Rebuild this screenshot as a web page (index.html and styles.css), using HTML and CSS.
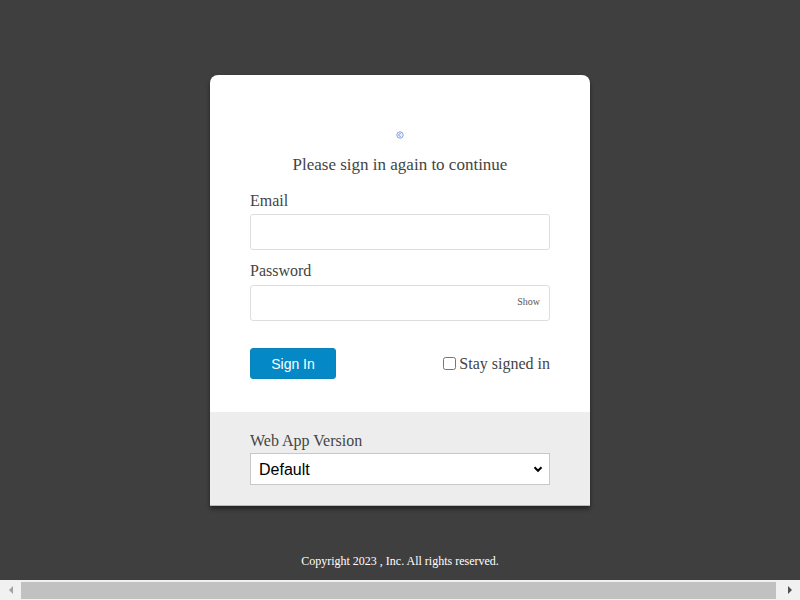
FILE: index.html
```html
<!DOCTYPE html>
<html lang="en">
<head>
<meta charset="utf-8">
<title>Sign in</title>
<link rel="stylesheet" href="styles.css">
</head>
<body>
<div class="page">
  <div class="card">
    <div class="card-main">
      <div class="logo">
        <svg width="8" height="8" viewBox="0 0 8 8" aria-label="logo">
          <circle cx="4" cy="4" r="3.2" fill="none" stroke="#7f9fdc" stroke-width="1"/>
          <path d="M5.2 3.1 A1.4 1.4 0 1 0 5.2 4.9" fill="none" stroke="#6d8fd4" stroke-width="0.9"/>
        </svg>
      </div>
      <h1 class="title">Please sign in again to continue</h1>
      <form class="form">
        <label class="label" for="email">Email</label>
        <input class="field" id="email" type="text">
        <label class="label label-pw" for="pw">Password</label>
        <div class="pw-wrap">
          <input class="field" id="pw" type="password">
          <span class="show">Show</span>
        </div>
        <div class="actions">
          <button class="btn" type="button">Sign In</button>
          <label class="stay"><input type="checkbox" class="check">Stay signed in</label>
        </div>
      </form>
    </div>
    <div class="card-foot">
      <label class="label" for="ver">Web App Version</label>
      <div class="select-wrap">
        <select class="select" id="ver">
          <option>Default</option>
        </select>
        <svg class="chev" width="10" height="7" viewBox="0 0 10 7" aria-hidden="true">
          <path d="M1.5 1.3 L5 4.8 L8.5 1.3" fill="none" stroke="#000" stroke-width="2"/>
        </svg>
      </div>
    </div>
  </div>
  <footer class="footer">Copyright 2023 , Inc. All rights reserved.</footer>
</div>
<div class="hscroll" aria-hidden="true">
  <span class="arrow arrow-left"></span>
  <span class="thumb"></span>
  <span class="arrow arrow-right"></span>
</div>
</body>
</html>
```
FILE: styles.css
```css
html, body {
  margin: 0;
  padding: 0;
  background: #3f3f3f;
}
body {
  font-family: "Liberation Serif", "Times New Roman", serif;
  color: #444;
}
.page {
  padding-top: 75px;
}
.card {
  width: 380px;
  margin: 0 auto;
  background: #fff;
  border-radius: 8px 8px 0 0;
  overflow: hidden;
  box-shadow: 0 3px 4px rgba(0, 0, 0, 0.45);
}
.card-main {
  padding: 55px 40px 33px;
}
.logo {
  display: flex;
  justify-content: center;
  height: 10px;
  align-items: center;
}
.logo svg {
  display: block;
}
.title {
  margin: 15px 0 0;
  font-size: 17px;
  font-weight: normal;
  line-height: 20px;
  text-align: center;
  color: #444;
}
.form {
  margin-top: 17px;
  display: flex;
  flex-direction: column;
}
.label {
  display: block;
  font-size: 16px;
  line-height: 18px;
  color: #444;
  margin-bottom: 4px;
}
.label-pw {
  margin-top: 12px;
  margin-bottom: 5px;
}
.field {
  display: block;
  box-sizing: border-box;
  width: 300px;
  height: 36px;
  margin: 0;
  border: 1px solid #ddd;
  border-radius: 3px;
  background: #fff;
  outline: none;
}
.pw-wrap {
  position: relative;
}
.show {
  position: absolute;
  right: 10px;
  top: 10px;
  font-size: 10px;
  line-height: 14px;
  color: #555;
}
.actions {
  margin-top: 27px;
  display: flex;
  justify-content: space-between;
  align-items: center;
}
.btn {
  width: 86px;
  height: 31px;
  border: 1px solid #0a84b8;
  border-radius: 3px;
  background: #0489c6;
  color: #fff;
  font-family: "Liberation Sans", Arial, sans-serif;
  font-size: 14px;
  padding: 0;
}
.stay {
  display: flex;
  align-items: center;
  font-size: 16px;
  line-height: 18px;
  color: #444;
}
.check {
  width: 13px;
  height: 13px;
  margin: 0 3px 0 0;
}
.card-foot {
  background: #ededed;
  padding: 20px 40px 20px;
  border-bottom: 1px solid #b9b9b9;
}
.card-foot .label {
  margin-bottom: 3px;
}
.select-wrap {
  position: relative;
  width: 300px;
}
.select {
  display: block;
  width: 300px;
  height: 32px;
  box-sizing: border-box;
  border: 1px solid #c8c8c8;
  border-radius: 0;
  background: #fff;
  font-family: "Liberation Sans", Arial, sans-serif;
  font-size: 16px;
  color: #000;
  padding: 0 8px;
  -webkit-appearance: none;
  appearance: none;
}
.chev {
  position: absolute;
  right: 7px;
  top: 13px;
  pointer-events: none;
}
.footer {
  margin-top: 48px;
  width: 100%;
  padding-right: 11px;
  text-align: center;
  font-size: 12px;
  line-height: 14px;
  color: #fff;
}
.hscroll {
  position: fixed;
  left: 0;
  right: 0;
  bottom: 0;
  height: 20px;
  background: #f1f1f1;
  display: flex;
  align-items: center;
}
.arrow {
  width: 21px;
  height: 20px;
  display: flex;
  align-items: center;
  justify-content: center;
  flex: none;
}
.arrow::before {
  content: "";
  display: block;
  width: 0;
  height: 0;
  border-top: 4px solid transparent;
  border-bottom: 4px solid transparent;
}
.arrow-left::before {
  border-right: 4px solid #a3a3a3;
}
.arrow-right::before {
  border-left: 4px solid #505050;
}
.thumb {
  flex: 1;
  height: 17px;
  background: #c1c1c1;
  margin-right: 3px;
}
```
